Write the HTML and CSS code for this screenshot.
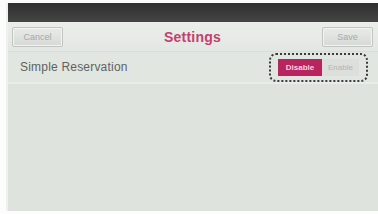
FILE: index.html
```html
<!DOCTYPE html>
<html>
<head>
<meta charset="utf-8">
<link rel="stylesheet" href="styles.css">
</head>
<body>
<div class="screen">
  <div class="statusbar"></div>
  <div class="header">
    <button class="btn">Cancel</button>
    <div class="title">Settings</div>
    <button class="btn">Save</button>
  </div>
  <div class="row">
    <span class="label">Simple Reservation</span>
    <div class="toggle">
      <span class="opt on">Disable</span>
      <span class="opt off">Enable</span>
    </div>
  </div>
  <div class="body"></div>
</div>
</body>
</html>
```
FILE: styles.css
```css
html, body {
  margin: 0;
  padding: 0;
  background: #fbfcfb;
  width: 378px;
  height: 214px;
  overflow: hidden;
  font-family: "Liberation Sans", Arial, sans-serif;
}
.screen {
  margin: 3px 0 0 6px;
  height: 208px;
  background: #dfe4df;
  display: flex;
  flex-direction: column;
  border-left: 2px solid #eef1ee;
}
.statusbar {
  height: 19px;
  background: linear-gradient(#2f2f2f, #454545);
}
.header {
  height: 30px;
  box-sizing: border-box;
  padding: 5px 5px 0 4px;
  display: flex;
  align-items: flex-start;
  justify-content: space-between;
  background: linear-gradient(#eceeec, #e3e7e3);
  border-bottom: 1px solid #d8ddd8;
}
.btn {
  width: 51px;
  height: 20px;
  box-sizing: border-box;
  border: 1px solid #c2c4c2;
  border-radius: 2px;
  background: linear-gradient(#e9ebe9, #d6d9d6);
  color: #a6a9a6;
  font-family: "Liberation Sans", Arial, sans-serif;
  font-size: 9px;
  padding: 0;
  box-shadow: inset 0 0 0 1px #f2f3f2;
}
.title {
  color: #c4406e;
  font-size: 14px;
  font-weight: bold;
  margin-top: 2px;
  letter-spacing: 0.2px;
}
.row {
  height: 32px;
  box-sizing: border-box;
  display: flex;
  align-items: center;
  justify-content: space-between;
  padding: 0 10px 0 12px;
  border-bottom: 2px solid #e9ede9;
  background: #e1e6e1;
}
.label {
  color: #5f625f;
  font-size: 12px;
  letter-spacing: 0.2px;
}
.toggle {
  display: flex;
  padding: 4px 7px 4px 7px;
  border: 2px dotted #3a3a3a;
  border-radius: 7px;
  height: 17px;
}
.opt {
  font-size: 8px;
  font-weight: bold;
  display: flex;
  align-items: center;
  justify-content: center;
}
.opt.on {
  width: 44px;
  background: #b8245e;
  color: #f3d6e0;
}
.opt.off {
  width: 37px;
  background: #dcdfdc;
  color: #b2b5b2;
  font-weight: normal;
}
.body {
  flex: 1;
  background: #dee3de;
}
```
